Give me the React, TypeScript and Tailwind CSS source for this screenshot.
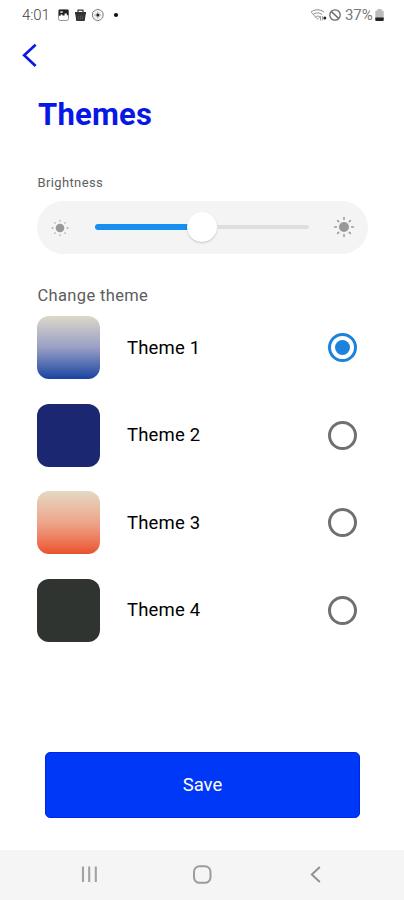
import React, { useState } from "react";

const themes = [
  { name: "Theme 1", swatch: "bg-linear-to-b from-[#dcd8c8] via-[#9a9fc4] to-[#18429f]" },
  { name: "Theme 2", swatch: "bg-[#1b2770]" },
  { name: "Theme 3", swatch: "bg-linear-to-b from-[#e3d9c3] via-[#eda58b] to-[#ea502b]" },
  { name: "Theme 4", swatch: "bg-[#2f3430]" },
];

function StatusBar() {
  return (
    <header className="flex h-[31px] shrink-0 items-center justify-between pl-[22px] pr-[20px] text-[#777]">
      <div className="flex items-center">
        <span className="w-[35px] text-[15px] font-light leading-none tracking-[-0.1px] text-[#444]">4:01</span>
        <svg width="64" height="14" viewBox="0 0 64 14" fill="none" className="-mt-px">
          <rect x="1.5" y="1.5" width="10" height="11" rx="1.8" stroke="#888" strokeWidth="0.9" />
          <path d="M1.8 1.8h9.7v5.4H9.8V5.6H7.6v2H5.4V6.4H3.6v1.4H1.8z" fill="#222" />
          <path d="M3.3 3.3h2.4v1.5H3.3z" fill="#eee" />
          <path d="M18.3 6h10.4l-1 7h-8.4z" fill="#333" />
          <path d="M18 4h11v2.2H18z" fill="#333" />
          <path d="M21 4V2.2h5V4" stroke="#333" strokeWidth="1.2" />
          <path d="M21.5 7.5v4M23.5 7.5v4M25.5 7.5v4" stroke="#666" strokeWidth="0.6" />
          <path d="M40.8 1.3l2.6 1 2.4 1.9.3 2.8-.5 2.8-2.2 2-2.6.9-2.6-.9-2.2-2-.5-2.8.3-2.8 2.4-1.9z" stroke="#777" strokeWidth="1" />
          <path d="M40.8 3.4v2M40.8 8.6v2M37.4 7h2M42.2 7h2M38.4 4.6l1 1M42.2 8.4l1 1M43.2 4.6l-1 1M39.4 8.4l-1 1" stroke="#777" strokeWidth="0.8" />
          <circle cx="40.8" cy="7" r="1.5" fill="#222" />
          <circle cx="59" cy="7" r="2.1" fill="#111" />
        </svg>
      </div>
      <div className="flex items-center">
        <svg width="34" height="14" viewBox="0 0 34 14" fill="none" stroke="#888" className="-mt-px">
          <path d="M1 4.2c4-3.2 9-3.2 13 0M3 6.6c3-2.3 6-2.3 9 0M5.2 9c1.6-1.2 3.2-1.2 4.7 0" strokeWidth="1" />
          <path d="M1.3 4.2l6.2 7 2-2M10.5 8v4.5M12.4 8v4.5" strokeWidth="0.8" />
          <circle cx="14.8" cy="10" r="1.5" fill="#222" stroke="none" />
          <circle cx="25" cy="7" r="5.2" strokeWidth="1.3" stroke="#666" />
          <path d="M21.6 3.7l6.8 6.6" strokeWidth="1.5" stroke="#666" />
        </svg>
        <span className="ml-[1px] w-[30px] text-[15px] leading-none tracking-[-0.1px]">37%</span>
        <svg width="9" height="13" viewBox="0 0 9 13">
          <path d="M2.5 0h4v1.4h1A1.2 1.2 0 0 1 8.7 2.6v8.2A1.2 1.2 0 0 1 7.5 12h-6A1.2 1.2 0 0 1 .3 10.8V2.6a1.2 1.2 0 0 1 1.2-1.2h1z" fill="#bbb" />
          <path d="M.3 8.5h8.4v2.3A1.2 1.2 0 0 1 7.5 12h-6A1.2 1.2 0 0 1 .3 10.8z" fill="#222" />
        </svg>
      </div>
    </header>
  );
}

function Sun({ bright }: { bright?: boolean }) {
  return (
    <svg width="22" height="22" viewBox="-11 -11 22 22" className="shrink-0">
      <circle r={bright ? 5 : 4.3} fill="#999" />
      <path
        d={
          bright
            ? "M0-7.6V-9.4M0 7.6V9.4M-7.6 0H-9.4M7.6 0H9.4M-5.2-5.2l-1.2-1.2M5.2-5.2l1.2-1.2M-5.2 5.2l-1.2 1.2M5.2 5.2l1.2 1.2"
            : "M0-6.9V-7.6M0 6.9V7.6M-7.1 0H-8M7.1 0H8M-4.9-4.9l-.5-.5M4.9-4.9l.5-.5M-4.9 4.9l-.5.5M4.9 4.9l.5.5"
        }
        stroke={bright ? "#999" : "#aaa"}
        strokeWidth={bright ? 1.5 : 1.3}
        strokeLinecap="round"
      />
    </svg>
  );
}

export default function App() {
  const [selected, setSelected] = useState(0);
  return (
    <div className="flex h-[900px] w-[404px] flex-col overflow-hidden bg-white font-[Roboto,sans-serif]">
      <StatusBar />
      <button aria-label="Back" className="ml-[21px] mt-[12px] h-[25px] w-[16px] shrink-0">
        <svg width="16" height="25" viewBox="0 0 16 25" fill="none" stroke="#0b18e6" strokeWidth="2.7">
          <path d="M14.6 1.7L3.2 12.3l11.4 10.8" />
        </svg>
      </button>

      <main className="flex flex-col pl-[37.4px] pr-[36px]">
        <h1 className="ml-[0.6px] mt-[26px] h-[40px] text-[31px] font-bold leading-[41px] tracking-[0.2px] text-[#0718e6]">Themes</h1>

        <h2 className="ml-[0.1px] mt-[40px] h-[18px] text-[13px] leading-[18px] tracking-[0.37px] text-[#606060]">Brightness</h2>
        <div className="-ml-[0.4px] mt-[9px] flex h-[53px] items-center rounded-full bg-[#f4f4f4] pl-[12px] pr-[13px]">
          <Sun />
          <div className="ml-[24px] flex h-[31px] w-[214px] items-center pb-[2px]">
            <div className="h-[6px] w-[93px] rounded-l-full bg-[#168ff0]" />
            <div className="-ml-px size-[30px] shrink-0 rounded-full bg-white shadow-[0_1px_2px_rgba(0,0,0,0.2)]" />
            <div className="h-[4px] flex-1 rounded-r-full bg-[#dedede]" />
          </div>
          <div className="ml-auto flex pb-[2px]">
            <Sun bright />
          </div>
        </div>

        <h2 className="ml-[0.1px] mt-[31px] h-[20px] text-[16.5px] leading-[21px] tracking-[0.35px] text-[#5c5c5c]">Change theme</h2>
        <div className="mt-[11px] flex flex-col gap-[24.5px]">
          {themes.map((theme, i) => (
            <button key={theme.name} onClick={() => setSelected(i)} className="flex h-[63px] items-center text-left">
              <span className={`size-[63px] rounded-[12px] ${theme.swatch}`} />
              <span className="ml-[26.6px] text-[18.5px] leading-6 tracking-[0.2px] text-black">{theme.name}</span>
              <span
                className={`ml-auto mr-[11px] flex size-[29px] items-center justify-center rounded-full border-[3px] ${
                  selected === i ? "border-[#1b83dc]" : "border-[#707070]"
                }`}
              >
                {selected === i && <span className="size-[15px] rounded-full bg-[#1b83dc]" />}
              </span>
            </button>
          ))}
        </div>
      </main>

      <button className="mx-[45px] mr-[44px] mt-auto h-[66px] shrink-0 rounded-[5px] border border-[#0424e8] bg-[#0038f8] pt-px text-[18.5px] text-white">
        Save
      </button>

      <nav className="mt-[32px] flex h-[50px] shrink-0 items-center justify-between bg-[#f5f5f5] pl-[80px] pr-[80px]">
        <svg width="20" height="20" viewBox="0 0 20 20" stroke="#a2a2a2" strokeWidth="2.1">
          <path d="M3 1.5v15.5M9.2 1.5v15.5M15.8 1.5v15.5" />
        </svg>
        <svg width="20" height="20" viewBox="0 0 20 20" fill="none" stroke="#9c9c9c" strokeWidth="2">
          <rect x="2" y="1.3" width="16.5" height="16.5" rx="5.5" />
        </svg>
        <svg width="20" height="20" viewBox="0 0 20 20" fill="none" stroke="#8f8f8f" strokeWidth="1.9">
          <path d="M15.8 2L7.8 9.5l8 7.5" />
        </svg>
      </nav>
    </div>
  );
}
